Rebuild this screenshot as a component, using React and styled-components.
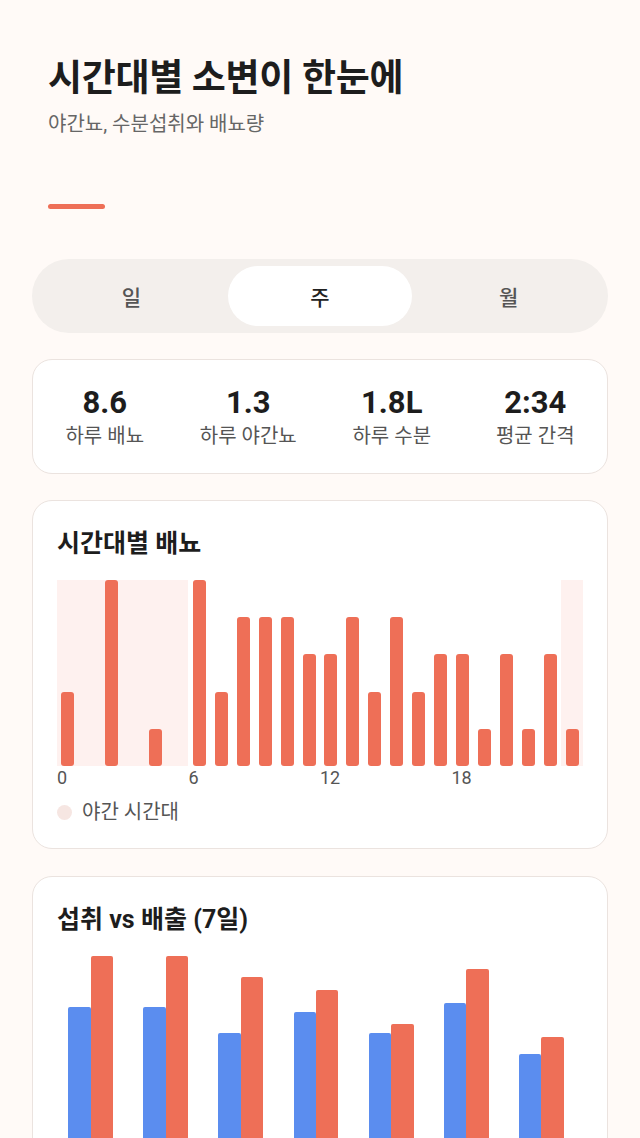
import React from "react";
import styled, { createGlobalStyle } from "styled-components";

const GlobalStyle = createGlobalStyle`
  html, body { margin: 0; padding: 0; background: #fffaf7; }
  body { font-family: Roboto, "Noto Sans CJK KR", sans-serif; color: #1f1f1f; }
  * { box-sizing: border-box; }
`;

const Page = styled.div`
  padding: 57px 32px 40px;
  display: flex;
  flex-direction: column;
`;

const Header = styled.header`
  padding: 0 16px;
  display: flex;
  flex-direction: column;
`;

const Title = styled.h1`
  margin: 0;
  font-size: 37px;
  line-height: 44px;
  font-weight: 700;
  letter-spacing: -0.3px;
  color: #1d1d1d;
`;

const Subtitle = styled.p`
  margin: 10px 0 0;
  font-size: 20px;
  line-height: 26px;
  color: #666;
`;

const Accent = styled.div`
  margin-top: 67px;
  width: 57px;
  height: 5px;
  border-radius: 3px;
  background: #ee6f57;
`;

const Segmented = styled.div`
  margin-top: 50px;
  height: 74px;
  border-radius: 37px;
  background: #f3efec;
  padding: 7px;
  display: grid;
  grid-template-columns: repeat(3, 1fr);
  gap: 4px;
`;

const Segment = styled.button`
  border: none;
  border-radius: 31px;
  background: ${(p) => (p.$active ? "#ffffff" : "transparent")};
  color: ${(p) => (p.$active ? "#222" : "#555")};
  font-family: inherit;
  font-size: 21px;
  font-weight: 500;
  cursor: pointer;
`;

const Card = styled.section`
  margin-top: ${(p) => p.$gap || 26}px;
  background: #fff;
  border: 1px solid #ebe3df;
  border-radius: 20px;
`;

const StatsGrid = styled.div`
  display: grid;
  grid-template-columns: repeat(4, 1fr);
  padding: 26px 0 24px;
`;

const Stat = styled.div`
  display: flex;
  flex-direction: column;
  align-items: center;
  gap: 3px;
`;

const StatValue = styled.div`
  font-size: 31px;
  line-height: 34px;
  font-weight: 700;
  color: #1d1d1d;
`;

const StatLabel = styled.div`
  font-size: 20px;
  line-height: 26px;
  color: #555;
`;

const ChartCard = styled(Card)`
  padding: 28px 24px 23px;
`;

const CardTitle = styled.h2`
  margin: 0;
  font-size: 25px;
  line-height: 30px;
  font-weight: 700;
  color: #1d1d1d;
`;

const HourChart = styled.div`
  margin-top: 21px;
  height: 186px;
  display: grid;
  grid-template-columns: repeat(24, 1fr);
`;

const HourSlot = styled.div`
  display: flex;
  align-items: flex-end;
  justify-content: center;
  background: ${(p) => (p.$night ? "#fef1ef" : "transparent")};
`;

const HourBar = styled.div`
  width: 13px;
  border-radius: 3px;
  background: #ee6f57;
`;

const AxisRow = styled.div`
  margin-top: 2px;
  display: grid;
  grid-template-columns: repeat(24, 1fr);
`;

const AxisLabel = styled.span`
  grid-column: ${(p) => p.$col} / span 3;
  font-size: 18px;
  line-height: 20px;
  color: #555;
`;

const Legend = styled.div`
  margin-top: 11px;
  display: flex;
  align-items: center;
  gap: 10px;
`;

const LegendDot = styled.span`
  width: 15px;
  height: 15px;
  border-radius: 50%;
  background: ${(p) => p.$color};
`;

const LegendText = styled.span`
  font-size: 20px;
  line-height: 26px;
  color: #555;
`;

const CompareCard = styled(Card)`
  padding: 28px 24px 24px;
`;

const CompareChart = styled.div`
  margin: 21px 4px 0 -4px;
  height: 205px;
  display: grid;
  grid-template-columns: repeat(7, 1fr);
`;

const Group = styled.div`
  display: flex;
  align-items: flex-end;
  justify-content: center;
`;

const PairBar = styled.div`
  width: 22.4px;
  border-radius: 2px 2px 0 0;
  background: ${(p) => p.$color};
`;

const hourly = [2, 0, 5, 0, 1, 0, 5, 2, 4, 4, 4, 3, 3, 4, 2, 4, 2, 3, 3, 1, 3, 1, 3, 1];
const nightHours = new Set([0, 1, 2, 3, 4, 5, 23]);
const intake = [1800, 1800, 1500, 1750, 1500, 1850, 1250];
const output = [2400, 2400, 2150, 2000, 1600, 2250, 1450];
const MAX = 2400;

const stats = [
  { value: "8.6", label: "하루 배뇨" },
  { value: "1.3", label: "하루 야간뇨" },
  { value: "1.8L", label: "하루 수분" },
  { value: "2:34", label: "평균 간격" },
];

export default function App() {
  const [tab, setTab] = React.useState("주");
  return (
    <>
      <GlobalStyle />
      <Page>
        <Header>
          <Title>시간대별 소변이 한눈에</Title>
          <Subtitle>야간뇨, 수분섭취와 배뇨량</Subtitle>
          <Accent />
        </Header>

        <Segmented>
          {["일", "주", "월"].map((t) => (
            <Segment key={t} $active={tab === t} onClick={() => setTab(t)}>
              {t}
            </Segment>
          ))}
        </Segmented>

        <Card>
          <StatsGrid>
            {stats.map((s) => (
              <Stat key={s.label}>
                <StatValue>{s.value}</StatValue>
                <StatLabel>{s.label}</StatLabel>
              </Stat>
            ))}
          </StatsGrid>
        </Card>

        <ChartCard>
          <CardTitle>시간대별 배뇨</CardTitle>
          <HourChart>
            {hourly.map((v, i) => (
              <HourSlot key={i} $night={nightHours.has(i)}>
                {v > 0 && <HourBar style={{ height: `${(v / 5) * 100}%` }} />}
              </HourSlot>
            ))}
          </HourChart>
          <AxisRow>
            {[0, 6, 12, 18].map((h) => (
              <AxisLabel key={h} $col={h + 1}>
                {h}
              </AxisLabel>
            ))}
          </AxisRow>
          <Legend>
            <LegendDot $color="#f6e6e2" />
            <LegendText>야간 시간대</LegendText>
          </Legend>
        </ChartCard>

        <CompareCard $gap={27}>
          <CardTitle>섭취 vs 배출 (7일)</CardTitle>
          <CompareChart>
            {intake.map((v, i) => (
              <Group key={i}>
                <PairBar $color="#5b8def" style={{ height: `${(v / MAX) * 100}%` }} />
                <PairBar $color="#ee6f57" style={{ height: `${(output[i] / MAX) * 100}%` }} />
              </Group>
            ))}
          </CompareChart>
        </CompareCard>
      </Page>
    </>
  );
}
